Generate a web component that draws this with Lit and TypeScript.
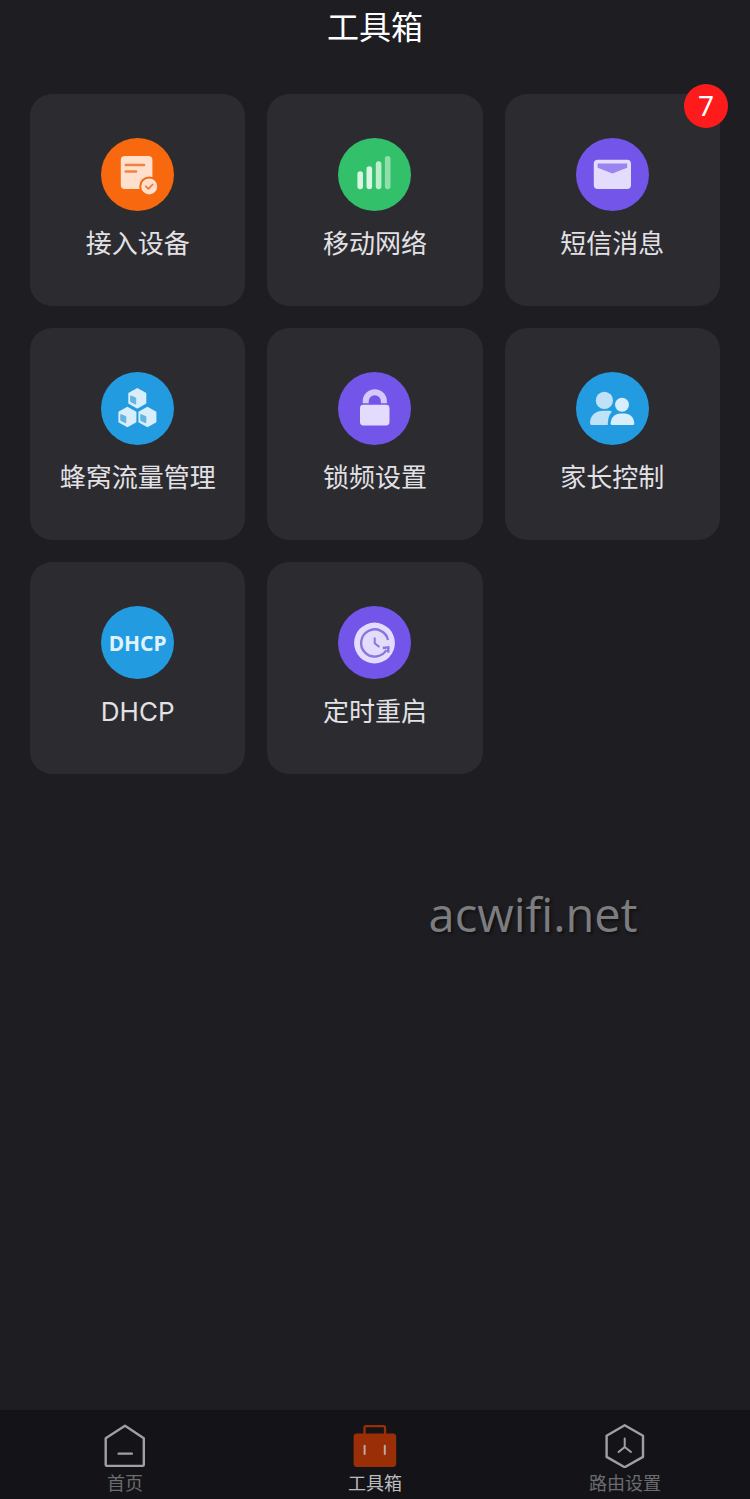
import { LitElement, html, svg, css, nothing } from "lit";
import type { SVGTemplateResult, TemplateResult } from "lit";
import { customElement, property } from "lit/decorators.js";
import { classMap } from "lit/directives/class-map.js";

type Tone = "orange" | "green" | "violet" | "blue";

interface Tool {
  label: string;
  tone: Tone;
  icon: SVGTemplateResult | null;
  mark?: string;
  badge?: number;
}

const cube = (x: number, y: number) => svg`
  <g transform="translate(${x} ${y})">
    <path d="M0-9.4 8.2-4.8V4.8L0 9.4-8.2 4.8V-4.8Z" fill="#d8eefb" stroke="#d8eefb" stroke-width="1.6" stroke-linejoin="round"/>
    <path d="M-6.6-2.4-1.6-.4V5.8L-6.6 3.4Z" fill="#62b4e3" stroke="#62b4e3" stroke-width="1" stroke-linejoin="round"/>
  </g>`;

const TOOLS: Tool[] = [
  {
    label: "接入设备",
    tone: "orange",
    icon: svg`
      <rect x="19.8" y="18" width="31.6" height="33" rx="4" fill="#ffe0cc"/>
      <path d="M24.8 27H43M24.8 33.5H35" stroke="#f0813f" stroke-width="2.6" stroke-linecap="round"/>
      <circle cx="48.2" cy="48.4" r="9" fill="#ffe0cc" stroke="#f8680f" stroke-width="2"/>
      <path d="m44.8 48.4 2.6 2.5 4.2-4.4" fill="none" stroke="#ee7a3a" stroke-width="1.8" stroke-linecap="round" stroke-linejoin="round"/>`,
  },
  {
    label: "移动网络",
    tone: "green",
    icon: svg`
      <rect x="19.4" y="33.3" width="5.6" height="18" rx="2.8" fill="#d9f7e3"/>
      <rect x="28.5" y="28.3" width="5.6" height="23" rx="2.8" fill="#d9f7e3"/>
      <rect x="37.8" y="23.3" width="5.6" height="28" rx="2.8" fill="#bdefcd"/>
      <rect x="46.9" y="18" width="5.6" height="33.3" rx="2.8" fill="#8fdfaa"/>`,
  },
  {
    label: "短信消息",
    tone: "violet",
    badge: 7,
    icon: svg`
      <rect x="17.8" y="21.7" width="37.2" height="29.3" rx="4" fill="#e4dcfc"/>
      <path d="M21.6 25.6H51.2V29.8L36.4 35.6 21.6 29.8Z" fill="#9a84f0"/>`,
  },
  {
    label: "蜂窝流量管理",
    tone: "blue",
    icon: svg`${cube(36.3, 26.3)}${cube(26.4, 45)}${cube(46.4, 45)}`,
  },
  {
    label: "锁频设置",
    tone: "violet",
    icon: svg`
      <path d="M27.7 31.2V29.4a9.1 9.1 0 0 1 18.2 0V31.2" fill="none" stroke="#d5c9fa" stroke-width="6"/>
      <rect x="22" y="32.8" width="29.5" height="20.6" rx="3.4" fill="#e4dcfc"/>`,
  },
  {
    label: "家长控制",
    tone: "blue",
    icon: svg`
      <circle cx="28.4" cy="28.4" r="8.6" fill="#bfe2f8"/>
      <path d="M14 51.3C14 43.6 19.5 38.8 27.5 38.8H32.5C34 38.8 35 39 36 39.6 33.3 42.6 31.9 46.5 31.8 53H15.6Q14 53 14 51.3Z" fill="#bfe2f8"/>
      <circle cx="46" cy="32.8" r="7" fill="#d8eefb"/>
      <path d="M34.6 51.5C35 45.3 39 41.6 44.6 41.6H48.6C54 41.6 58 45.3 58.3 51.5Q58.3 53 56.8 53H36Q34.6 53 34.6 51.5Z" fill="#d8eefb"/>`,
  },
  { label: "DHCP", tone: "blue", icon: null, mark: "DHCP" },
  {
    label: "定时重启",
    tone: "violet",
    icon: svg`
      <circle cx="36.5" cy="37" r="20.4" fill="#e4dcfc"/>
      <path d="M50 34A13.6 13.6 0 1 0 48.4 44" fill="none" stroke="#8a74e0" stroke-width="2.4"/>
      <path d="M44.8 42 50.4 41.4 50.2 46.6" fill="none" stroke="#8a74e0" stroke-width="2.4"/>
      <path d="M36.7 31.6V37.2L41.4 41" fill="none" stroke="#8a74e0" stroke-width="2"/>`,
  },
];

@customElement("tool-card")
export class ToolCard extends LitElement {
  @property({ attribute: false }) tool!: Tool;

  static styles = css`
    :host {
      display: block;
    }
    .card {
      position: relative;
      box-sizing: border-box;
      display: flex;
      flex-direction: column;
      align-items: center;
      gap: 17px;
      width: 100%;
      margin: 0;
      padding: 44px 8px 46px;
      border: 0;
      border-radius: 22px;
      background: #2c2b30;
      color: #e2e1e6;
      font: inherit;
      cursor: pointer;
    }
    .disc {
      display: grid;
      place-items: center;
      width: 73px;
      height: 73px;
      border-radius: 50%;
    }
    .orange { background: #f8680f; }
    .green { background: #33c06a; }
    .violet { background: #7455ea; }
    .blue { background: #239be0; }
    .icon {
      display: block;
      width: 73px;
      height: 73px;
    }
    .mark {
      color: #dff2fd;
      font: 700 21px/24px "Noto Sans", sans-serif;
    }
    .label {
      font-size: 26px;
      line-height: 32px;
      white-space: nowrap;
    }
    .badge {
      position: absolute;
      top: -10px;
      right: -8px;
      width: 44px;
      height: 44px;
      border-radius: 50%;
      background: #fe1b1b;
      color: #fff;
      font: 400 28px/42px "Noto Sans", sans-serif;
      text-align: center;
    }
  `;

  render(): TemplateResult {
    const { label, tone, icon, mark, badge } = this.tool;
    return html`
      <button class="card" type="button">
        <span class=${classMap({ disc: true, [tone]: true })}>
          ${icon
            ? html`<svg class="icon" viewBox="0 0 73 73" aria-hidden="true">${icon}</svg>`
            : html`<span class="mark" aria-hidden="true">${mark}</span>`}
        </span>
        <span class="label">${label}</span>
        ${badge ? html`<span class="badge">${badge}</span>` : nothing}
      </button>
    `;
  }
}

const TABS = [
  {
    label: "首页",
    href: "#home",
    active: false,
    icon: svg`
      <path d="M22 1.8 40.8 14.2V40.6Q40.8 41.9 39.5 41.9H4Q2.7 41.9 2.7 40.6V14.2Z" fill="none" stroke="#a0a0a2" stroke-width="2.4" stroke-linejoin="round"/>
      <path d="M15.5 29.7H29" stroke="#a0a0a2" stroke-width="2.2" stroke-linecap="round"/>`,
  },
  {
    label: "工具箱",
    href: "#tools",
    active: true,
    icon: svg`
      <path d="M11.5 10V3.6Q11.5 2.2 13 2.2H30.6Q32 2.2 32 3.6V10" fill="none" stroke="#9a2f07" stroke-width="2.3"/>
      <rect x=".6" y="9.6" width="42.6" height="33.4" rx="3.4" fill="#9a2f07"/>
      <path d="M11.6 21.8V30M31.8 21.8V30" stroke="#b9aaa6" stroke-width="2" stroke-linecap="round"/>`,
  },
  {
    label: "路由设置",
    href: "#router",
    active: false,
    icon: svg`
      <path d="M21.7 1.3 40 11.7V32.9L21.7 43.2 3.6 32.9V11.7Z" fill="none" stroke="#a0a0a2" stroke-width="2.4" stroke-linejoin="round"/>
      <path d="M21.7 14.4V23L15.6 28M21.7 23 28 28" fill="none" stroke="#a0a0a2" stroke-width="2" stroke-linecap="round"/>`,
  },
];

@customElement("tab-bar")
export class TabBar extends LitElement {
  static styles = css`
    :host {
      display: block;
    }
    .tabs {
      display: grid;
      grid-template-columns: repeat(3, 1fr);
      padding-top: 14px;
      background: #141418;
    }
    .tab {
      display: flex;
      flex-direction: column;
      align-items: center;
      gap: 1px;
      color: #6c6c70;
      font-size: 18px;
      line-height: 30px;
      text-decoration: none;
    }
    .active {
      color: #bcbcbe;
    }
    .icon {
      display: block;
      width: 44px;
      height: 44px;
    }
  `;

  render(): TemplateResult {
    return html`
      <nav class="tabs">
        ${TABS.map(
          (tab) => html`
            <a
              class=${classMap({ tab: true, active: tab.active })}
              href=${tab.href}
              aria-current=${tab.active ? "page" : nothing}
            >
              <svg class="icon" viewBox="0 0 44 44" aria-hidden="true">${tab.icon}</svg>
              <span>${tab.label}</span>
            </a>
          `
        )}
      </nav>
    `;
  }
}

@customElement("app-root")
export class AppRoot extends LitElement {
  static styles = css`
    :host {
      position: relative;
      display: flex;
      flex-direction: column;
      min-height: 100vh;
      background: #1e1d22;
      font-family: Inter, "Noto Sans CJK SC", sans-serif;
    }
    .title {
      margin: 0;
      color: #fff;
      font-size: 32px;
      font-weight: 400;
      line-height: 56px;
      text-align: center;
    }
    .main {
      flex: 1;
    }
    .grid {
      display: grid;
      grid-template-columns: repeat(3, minmax(0, 1fr));
      gap: 22px;
      margin: 0;
      padding: 38px 30px;
      list-style: none;
    }
    .watermark {
      position: absolute;
      top: 882px;
      right: 15%;
      color: #7d7d7f;
      font: 400 47px/64px "Open Sans", sans-serif;
      font-variant-ligatures: none;
      text-shadow: 2px 2px 3px #101012;
      pointer-events: none;
    }
  `;

  render(): TemplateResult {
    return html`
      <h1 class="title">工具箱</h1>
      <main class="main">
        <ul class="grid">
          ${TOOLS.map((tool) => html`<li><tool-card .tool=${tool}></tool-card></li>`)}
        </ul>
      </main>
      <span class="watermark">acwifi.net</span>
      <tab-bar></tab-bar>
    `;
  }
}
